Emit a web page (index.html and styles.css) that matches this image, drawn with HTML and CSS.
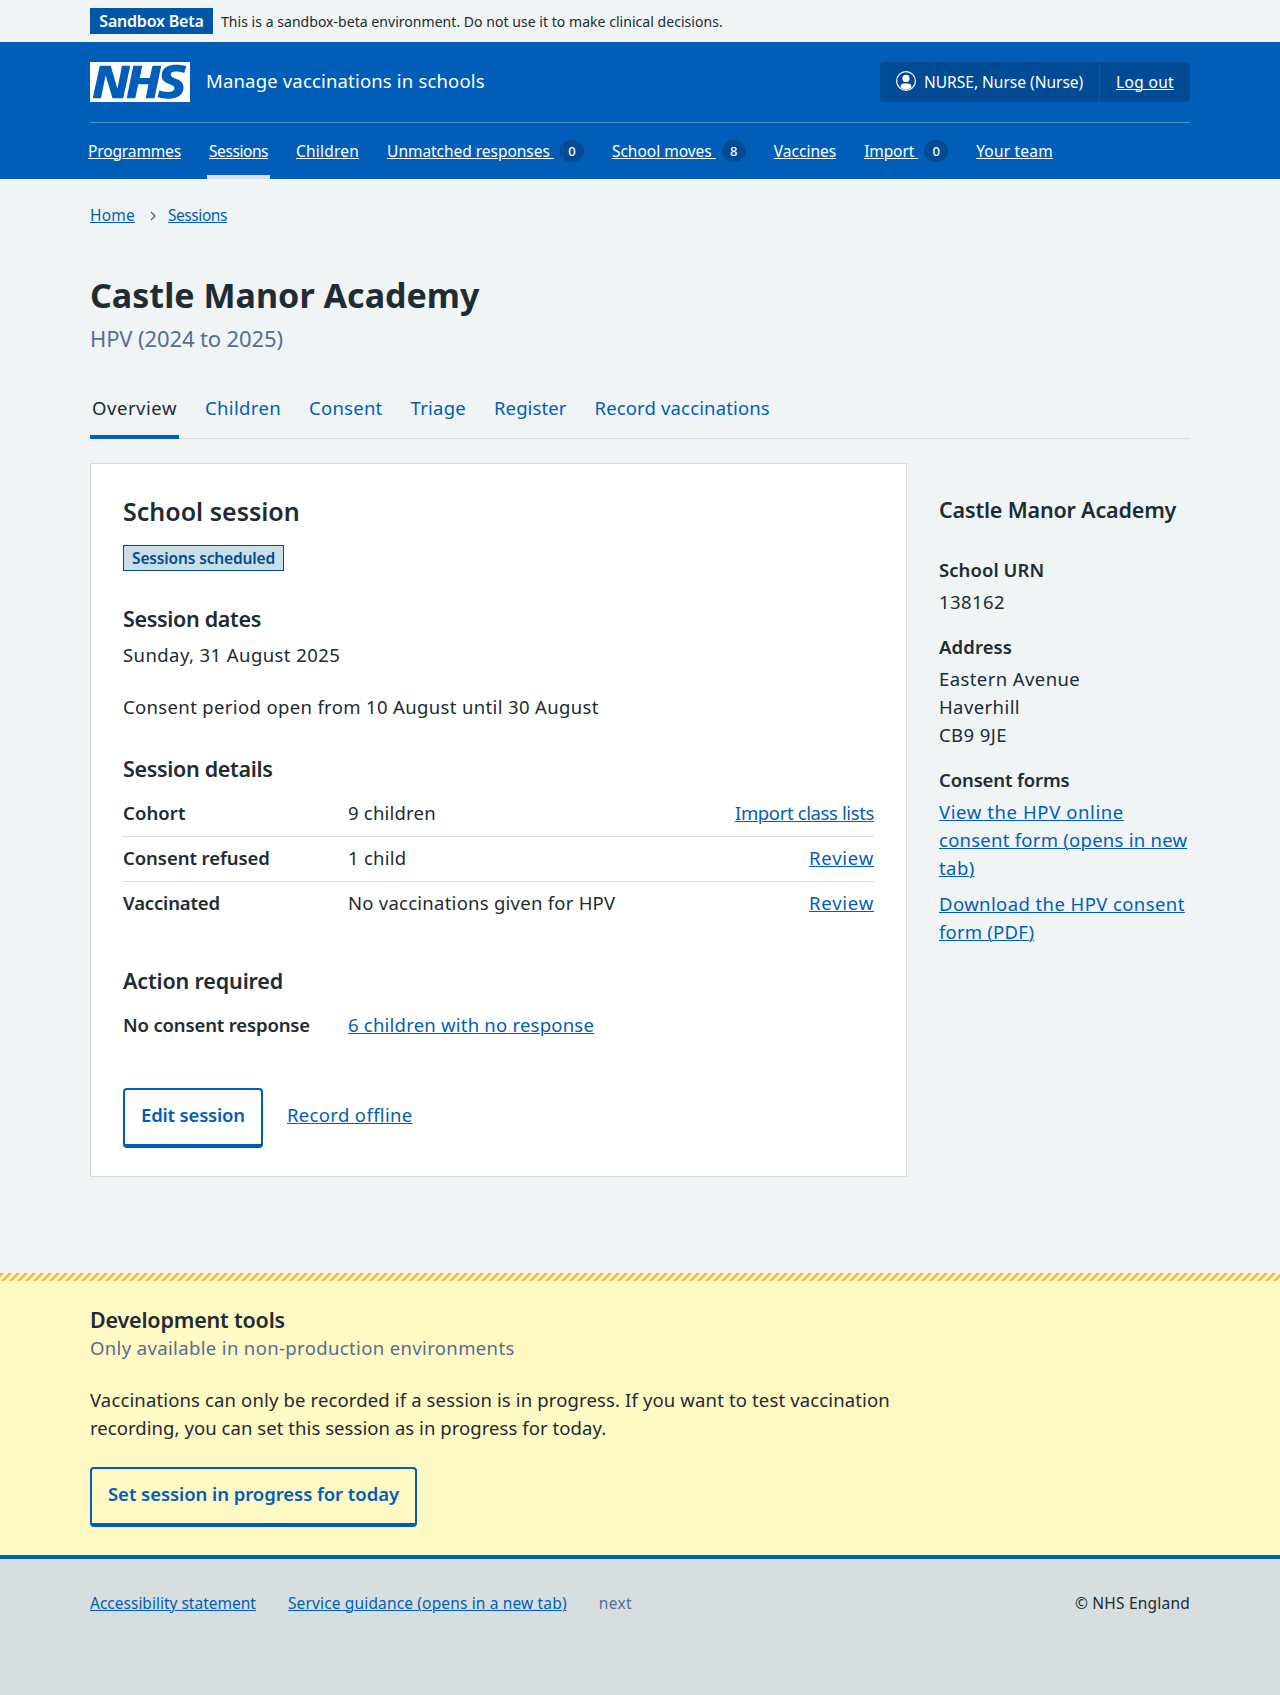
FILE: index.html
```html
<!DOCTYPE html>
<html lang="en">
<head>
<meta charset="utf-8">
<title>Castle Manor Academy – Manage vaccinations in schools</title>
<link rel="stylesheet" href="styles.css">
</head>
<body>
<div class="environment">
  <div class="container environment__row">
    <strong class="environment__tag">Sandbox Beta</strong>
    <span class="environment__text">This is a sandbox-beta environment. Do not use it to make clinical decisions.</span>
  </div>
</div>

<header class="header">
  <div class="container">
    <div class="header__top">
      <svg class="header__logo" viewBox="0 0 40 16" role="img" aria-label="NHS">
        <path fill="#fff" d="M0 0h40v16H0z"/>
        <path fill="#005eb8" d="M3.9 1.5h4.4l2.6 9h.1l1.8-9h3.3l-2.8 13H9l-2.7-9h-.1l-1.8 9H1.1M17.3 1.5h3.6l-1 4.9h4L25 1.5h3.5l-2.7 13h-3.5l1.1-5.6h-4.1l-1.2 5.6h-3.4M37.7 4.4c-.7-.3-1.6-.6-2.9-.6-1.4 0-2.5.2-2.5 1.3 0 1.8 5.1 1.2 5.1 5.1 0 3.6-3.3 4.5-6.4 4.5-1.3 0-2.9-.3-4-.7l.8-2.7c.7.4 2.1.7 3.2.7s2.8-.2 2.8-1.5c0-2.1-5.1-1.3-5.1-5 0-3.4 2.9-4.4 5.8-4.4 1.6 0 3.1.2 4 .6"/>
      </svg>
      <span class="header__service">Manage vaccinations in schools</span>
      <div class="account">
        <span class="account__item account__user">
          <svg class="account__icon" viewBox="0 0 20 20" aria-hidden="true">
            <circle cx="10" cy="10" r="9.4" fill="none" stroke="#fff" stroke-width="1.2"/>
            <circle cx="10" cy="7.4" r="3.6" fill="#fff"/>
            <path fill="#fff" d="M4.600 16.600v-.9c0-2 1.500-3.200 3.300-3.200h4.200c1.800 0 3.300 1.200 3.300 3.200v.9A8.600 8.600 0 0 1 10 18.700a8.600 8.600 0 0 1-5.400-2.100z"/>
          </svg>
          NURSE, Nurse (Nurse)
        </span>
        <span class="account__item account__logout"><a href="#">Log out</a></span>
      </div>
    </div>
    <nav class="nav">
      <a class="nav__link t-m13" href="#">Programmes</a>
      <a class="nav__link nav__link--current t-m43" href="#">Sessions</a>
      <a class="nav__link t-p20" href="#">Children</a>
      <a class="nav__link t-m03" href="#"><span>Unmatched responses&nbsp;</span><span class="nav__count">0</span></a>
      <a class="nav__link" href="#"><span>School moves&nbsp;</span><span class="nav__count">8</span></a>
      <a class="nav__link" href="#">Vaccines</a>
      <a class="nav__link t-m10" href="#"><span>Import&nbsp;</span><span class="nav__count">0</span></a>
      <a class="nav__link t-p20" href="#">Your team</a>
    </nav>
  </div>
</header>

<main class="container main">
  <nav class="breadcrumb">
    <a class="t-p20" href="#">Home</a>
    <svg class="breadcrumb__chevron" viewBox="0 0 6 10" aria-hidden="true"><path d="M1 1l4 4-4 4" fill="none" stroke="#4c6272" stroke-width="1.3"/></svg>
    <a class="t-m43" href="#">Sessions</a>
  </nav>

  <h1 class="title">Castle Manor Academy</h1>
  <p class="subtitle">HPV (2024 to 2025)</p>

  <nav class="tabs">
    <a class="tabs__link tabs__link--current t-p50" href="#">Overview</a>
    <a class="tabs__link t-p35" href="#">Children</a>
    <a class="tabs__link t-p25" href="#">Consent</a>
    <a class="tabs__link t-p25" href="#">Triage</a>
    <a class="tabs__link t-p10" href="#">Register</a>
    <a class="tabs__link t-p15" href="#">Record vaccinations</a>
  </nav>

  <div class="columns">
    <section class="card">
      <h2 class="card__title">School session</h2>
      <strong class="tag">Sessions scheduled</strong>

      <h3 class="heading heading--dates">Session dates</h3>
      <p class="card__date t-p42">Sunday, 31 August 2025</p>
      <p class="card__period t-p35">Consent period open from 10 August until 30 August</p>

      <h3 class="heading heading--details">Session details</h3>
      <dl class="summary">
        <div class="summary__row">
          <dt class="t-p10">Cohort</dt><dd class="t-p20">9 children</dd>
          <dd class="summary__action"><a class="t-m38" href="#">Import class lists</a></dd>
        </div>
        <div class="summary__row">
          <dt class="t-m05">Consent refused</dt><dd class="t-p25">1 child</dd>
          <dd class="summary__action"><a class="t-p75" href="#">Review</a></dd>
        </div>
        <div class="summary__row">
          <dt class="t-m15">Vaccinated</dt><dd class="t-p25">No vaccinations given for HPV</dd>
          <dd class="summary__action"><a class="t-p75" href="#">Review</a></dd>
        </div>
      </dl>

      <h3 class="heading heading--action">Action required</h3>
      <dl class="summary">
        <div class="summary__row">
          <dt class="t-m15">No consent response</dt>
          <dd><a class="t-p22" href="#">6 children with no response</a></dd>
        </div>
      </dl>

      <div class="card__buttons">
        <a class="button t-m18" href="#">Edit session</a>
        <a class="t-p35" href="#">Record offline</a>
      </div>
    </section>

    <aside class="aside">
      <h2 class="heading heading--school">Castle Manor Academy</h2>
      <dl class="facts">
        <div><dt class="t-p05">School URN</dt><dd>138162</dd></div>
        <div><dt class="t-p10">Address</dt><dd>Eastern Avenue<br>Haverhill<br>CB9 9JE</dd></div>
        <div>
          <dt class="t-m13">Consent forms</dt>
          <dd>
            <a class="facts__link" href="#"><span class="t-p60">View the HPV online</span><br><span class="t-p25">consent form (opens in new</span><br><span>tab)</span></a>
            <a class="facts__link" href="#">Download the HPV consent<br><span class="t-p20">form (PDF)</span></a>
          </dd>
        </div>
      </dl>
    </aside>
  </div>
</main>

<section class="devtools">
  <div class="container">
    <h2 class="heading heading--dev">Development tools</h2>
    <p class="devtools__hint">Only available in non-production environments</p>
    <p class="devtools__text">Vaccinations can only be recorded if a session is in progress. If you want to test vaccination<br><span class="t-p05">recording, you can set this session as in progress for today.</span></p>
    <a class="button t-m05" href="#">Set session in progress for today</a>
  </div>
</section>

<footer class="footer">
  <div class="container footer__row">
    <a href="#">Accessibility statement</a>
    <a class="t-p15" href="#">Service guidance (opens in a new tab)</a>
    <span class="footer__version t-p35">next</span>
    <span class="footer__copyright t-p20">© NHS England</span>
  </div>
</footer>
</body>
</html>
```
FILE: styles.css
```css
* { box-sizing: border-box; }

body {
  margin: 0;
  background: #f0f4f5;
  color: #212b32;
  font: 400 18.5px/28px "Noto Sans", "Open Sans", sans-serif;
}

h1, h2, h3, p, dl, dd { margin: 0; }
dt { font-weight: 600; }

a {
  color: #005eb8;
  text-decoration: underline;
  text-decoration-thickness: 1px;
  text-decoration-skip-ink: auto;
  text-underline-offset: 1px;
}

.container { width: 1100px; margin: 0 auto; }

/* Tracking adjustments */
.t-m43 { letter-spacing: -0.43px; }
.t-m38 { letter-spacing: -0.38px; }
.t-m18 { letter-spacing: -0.18px; }
.t-m15 { letter-spacing: -0.15px; }
.t-m13 { letter-spacing: -0.13px; }
.t-m10 { letter-spacing: -0.1px; }
.t-m05 { letter-spacing: -0.06px; }
.t-m03 { letter-spacing: -0.03px; }
.t-p05 { letter-spacing: 0.06px; }
.t-p10 { letter-spacing: 0.1px; }
.t-p15 { letter-spacing: 0.15px; }
.t-p20 { letter-spacing: 0.21px; }
.t-p22 { letter-spacing: 0.22px; }
.t-p25 { letter-spacing: 0.25px; }
.t-p35 { letter-spacing: 0.35px; }
.t-p42 { letter-spacing: 0.42px; }
.t-p50 { letter-spacing: 0.54px; }
.t-p60 { letter-spacing: 0.6px; }
.t-p75 { letter-spacing: 0.77px; }

/* Environment banner */
.environment__row {
  display: flex;
  align-items: center;
  gap: 8px;
  height: 42px;
  line-height: 26px;
}
.environment__tag {
  width: 123px;
  text-align: center;
  background: #0056a8;
  color: #fff;
  font-size: 16px;
  font-weight: 600;
  letter-spacing: -0.2px;
}
.environment__text { padding-top: 2px; font-size: 14px; letter-spacing: 0.04px; }

/* Header */
.header { background: #005eb8; color: #fff; }
.header__top {
  display: flex;
  align-items: flex-start;
  padding: 20px 0;
  border-bottom: 1px solid #4a90cf;
}
.header__logo { width: 100px; height: 40px; }
.header__service {
  margin-left: 16px;
  line-height: 38px;
  letter-spacing: 0.17px;
}
.account {
  display: flex;
  width: 310px;
  height: 40px;
  margin-left: auto;
  border-radius: 4px;
  background: #004b93;
  font-size: 15.5px;
  line-height: 40px;
}
.account__item { display: block; padding: 0 16px; }
.account__user {
  display: flex;
  width: 220px;
  gap: 8px;
  border-right: 1px solid #005eb8;
  white-space: nowrap;
}
.account__icon { flex: none; width: 20px; height: 20px; margin-top: 9px; }
.account__logout { letter-spacing: 0.34px; }
.account a, .nav a { color: #fff; }

.nav {
  display: flex;
  gap: 24px;
  height: 56px;
  margin-left: -4px;
  font-size: 15.5px;
  line-height: 56px;
}
.nav__link {
  display: flex;
  padding: 0 2px;
  white-space: nowrap;
}
.nav__link:has(span) { text-decoration: none; }
.nav__link span:first-child { text-decoration: underline; text-decoration-thickness: 1px; }
.nav__link--current { box-shadow: inset 0 -4px #d8dde0; }
.nav__count {
  width: 24px;
  height: 22px;
  margin: 17px 0 0 6px;
  border-radius: 11px;
  background: #004b93;
  font-size: 13px;
  font-weight: 500;
  line-height: 23px;
  letter-spacing: 0;
  text-align: center;
}

/* Page heading */
.main { height: 1094px; padding-top: 24px; }
.breadcrumb {
  display: flex;
  font-size: 15.5px;
  line-height: 24px;
}
.breadcrumb__chevron { width: 6px; height: 10px; margin: 8px 12px 0 15px; }
.title {
  margin-top: 46px;
  font-size: 34px;
  font-weight: 700;
  line-height: 44px;
  letter-spacing: 0.03px;
}
.subtitle {
  margin-top: 5px;
  color: #546f92;
  font-size: 22px;
  line-height: 32px;
  letter-spacing: -0.12px;
}

.tabs {
  display: flex;
  gap: 24px;
  height: 60px;
  margin: 25px 0 24px;
  box-shadow: inset 0 -1px #d8dde0;
}
.tabs__link { padding: 15px 2px 0; text-decoration: none; }
.tabs__link--current { color: #212b32; box-shadow: inset 0 -4px #005eb8; }

.columns { display: flex; gap: 32px; align-items: flex-start; }

.heading {
  font-size: 21.5px;
  font-weight: 600;
  line-height: 28px;
  letter-spacing: -0.32px;
}

/* Session card */
.card {
  width: 817px;
  padding: 31px 32px 28px;
  border: 1px solid #d8dde0;
  background: #fff;
}
.card__title { font-size: 25px; font-weight: 600; line-height: 32px; }
.tag {
  display: block;
  width: 161px;
  height: 26px;
  margin-top: 18px;
  padding: 0 8px;
  border: 1px solid #004b8c;
  background: #c9dee6;
  color: #004b8c;
  font-size: 15.5px;
  font-weight: 600;
  line-height: 24px;
  letter-spacing: -0.14px;
  white-space: nowrap;
}
.heading--dates { margin-top: 34px; }
.card__date { margin-top: 8px; }
.card__period { margin-top: 24px; }
.heading--details { margin: 34px 0 9px; }
.heading--action { margin: 40px 0 9px; letter-spacing: -0.15px; }

.summary__row {
  display: flex;
  height: 45px;
  padding-top: 7px;
  border-bottom: 1px solid #d8dde0;
}
.summary__row:last-child { border-bottom: 0; }
.summary dt { width: 225px; }
.summary__action { margin-left: auto; }

.card__buttons { display: flex; gap: 24px; margin-top: 39px; }
.card__buttons a:last-child { margin-top: 13px; }
.button {
  display: inline-block;
  height: 60px;
  padding: 11px 16px 0;
  border: 2px solid #005eb8;
  border-bottom-width: 4px;
  border-radius: 4px;
  font-weight: 600;
  text-decoration: none;
  white-space: nowrap;
}

/* School facts */
.aside { width: 251px; padding-top: 33px; }
.heading--school { letter-spacing: -0.17px; white-space: nowrap; }
.facts { display: flex; flex-direction: column; gap: 17px; margin-top: 32px; }
.facts dd { margin-top: 4px; letter-spacing: 0.41px; }
.facts__link { display: block; white-space: nowrap; }
.facts__link + .facts__link { margin-top: 8px; }

/* Development tools */
.devtools {
  height: 282px;
  padding-top: 33px;
  background:
    repeating-linear-gradient(135deg, #f4bd5b 0 3.1px, #fff9c4 3.1px 5.657px) 0 0 / 1280px 8px no-repeat,
    #fff9c4;
}
.heading--dev { letter-spacing: -0.19px; }
.devtools__hint { color: #546f92; letter-spacing: 0.36px; }
.devtools__text { margin: 24px 0 25px; letter-spacing: 0.14px; }

/* Footer */
.footer {
  height: 140px;
  padding-top: 32px;
  border-top: 4px solid #005eb8;
  background: #d8dde0;
}
.footer__row {
  display: flex;
  gap: 32px;
  font-size: 15.5px;
  line-height: 24px;
}
.footer__version { color: #546f92; }
.footer__copyright { margin-left: auto; }
```
